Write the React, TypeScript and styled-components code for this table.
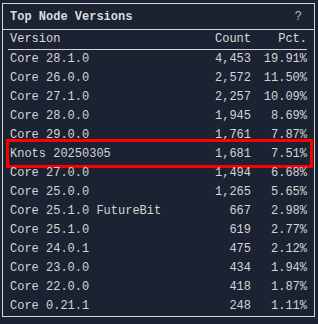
import React from "react";
import styled, { createGlobalStyle } from "styled-components";

const GlobalStyle = createGlobalStyle`
  html, body {
    margin: 0;
    padding: 0;
    background: #1b2232;
  }
  body {
    font-family: "Liberation Mono", "DejaVu Sans Mono", monospace;
    color: #d4d4d4;
  }
`;

const Page = styled.div`
  padding: 3px 0 0 2px;
`;

const Panel = styled.section`
  width: 311px;
  border: 1px solid #d6d6d6;
  background: #1b2232;
`;

const TitleBar = styled.header`
  height: 25px;
  display: flex;
  align-items: center;
  justify-content: space-between;
  padding: 0 12px 0 7px;
  border-bottom: 1px solid #d6d6d6;
`;

const Title = styled.h2`
  margin: 0;
  font-size: 12px;
  font-weight: 700;
  color: #dcdcdc;
`;

const Help = styled.span`
  font-size: 12px;
  color: #bdbdbd;
`;

const Table = styled.div`
  margin: 0 7px 0 5px;
`;

const Row = styled.div<{ $head?: boolean; $highlight?: boolean }>`
  position: relative;
  display: grid;
  grid-template-columns: 1fr 80px 56px;
  height: 19px;
  line-height: 19px;
  font-size: 12px;
  padding: 0 0 0 2px;
  border-bottom: ${(p) => (p.$head ? "1px solid #d6d6d6" : "none")};
  color: ${(p) => (p.$head ? "#dcdcdc" : "#d4d4d4")};

  &::after {
    content: "";
    display: ${(p) => (p.$highlight ? "block" : "none")};
    position: absolute;
    left: -2px;
    right: -6px;
    top: -6px;
    bottom: -4px;
    border: 3px solid #ff0000;
    pointer-events: none;
  }
`;

const Cell = styled.span<{ $right?: boolean }>`
  text-align: ${(p) => (p.$right ? "right" : "left")};
  white-space: pre;
`;

const rows: [string, string, string][] = [
  ["Core 28.1.0", "4,453", "19.91%"],
  ["Core 26.0.0", "2,572", "11.50%"],
  ["Core 27.1.0", "2,257", "10.09%"],
  ["Core 28.0.0", "1,945", "8.69%"],
  ["Core 29.0.0", "1,761", "7.87%"],
  ["Knots 20250305", "1,681", "7.51%"],
  ["Core 27.0.0", "1,494", "6.68%"],
  ["Core 25.0.0", "1,265", "5.65%"],
  ["Core 25.1.0 FutureBit", "667", "2.98%"],
  ["Core 25.1.0", "619", "2.77%"],
  ["Core 24.0.1", "475", "2.12%"],
  ["Core 23.0.0", "434", "1.94%"],
  ["Core 22.0.0", "418", "1.87%"],
  ["Core 0.21.1", "248", "1.11%"],
];

export default function App() {
  return (
    <Page>
      <GlobalStyle />
      <Panel>
        <TitleBar>
          <Title>Top Node Versions</Title>
          <Help>?</Help>
        </TitleBar>
        <Table>
          <Row $head>
            <Cell>Version</Cell>
            <Cell $right>Count</Cell>
            <Cell $right>Pct.</Cell>
          </Row>
          {rows.map(([v, c, p]) => (
            <Row key={v} $highlight={v.startsWith("Knots")}>
              <Cell>{v}</Cell>
              <Cell $right>{c}</Cell>
              <Cell $right>{p}</Cell>
            </Row>
          ))}
        </Table>
      </Panel>
    </Page>
  );
}
